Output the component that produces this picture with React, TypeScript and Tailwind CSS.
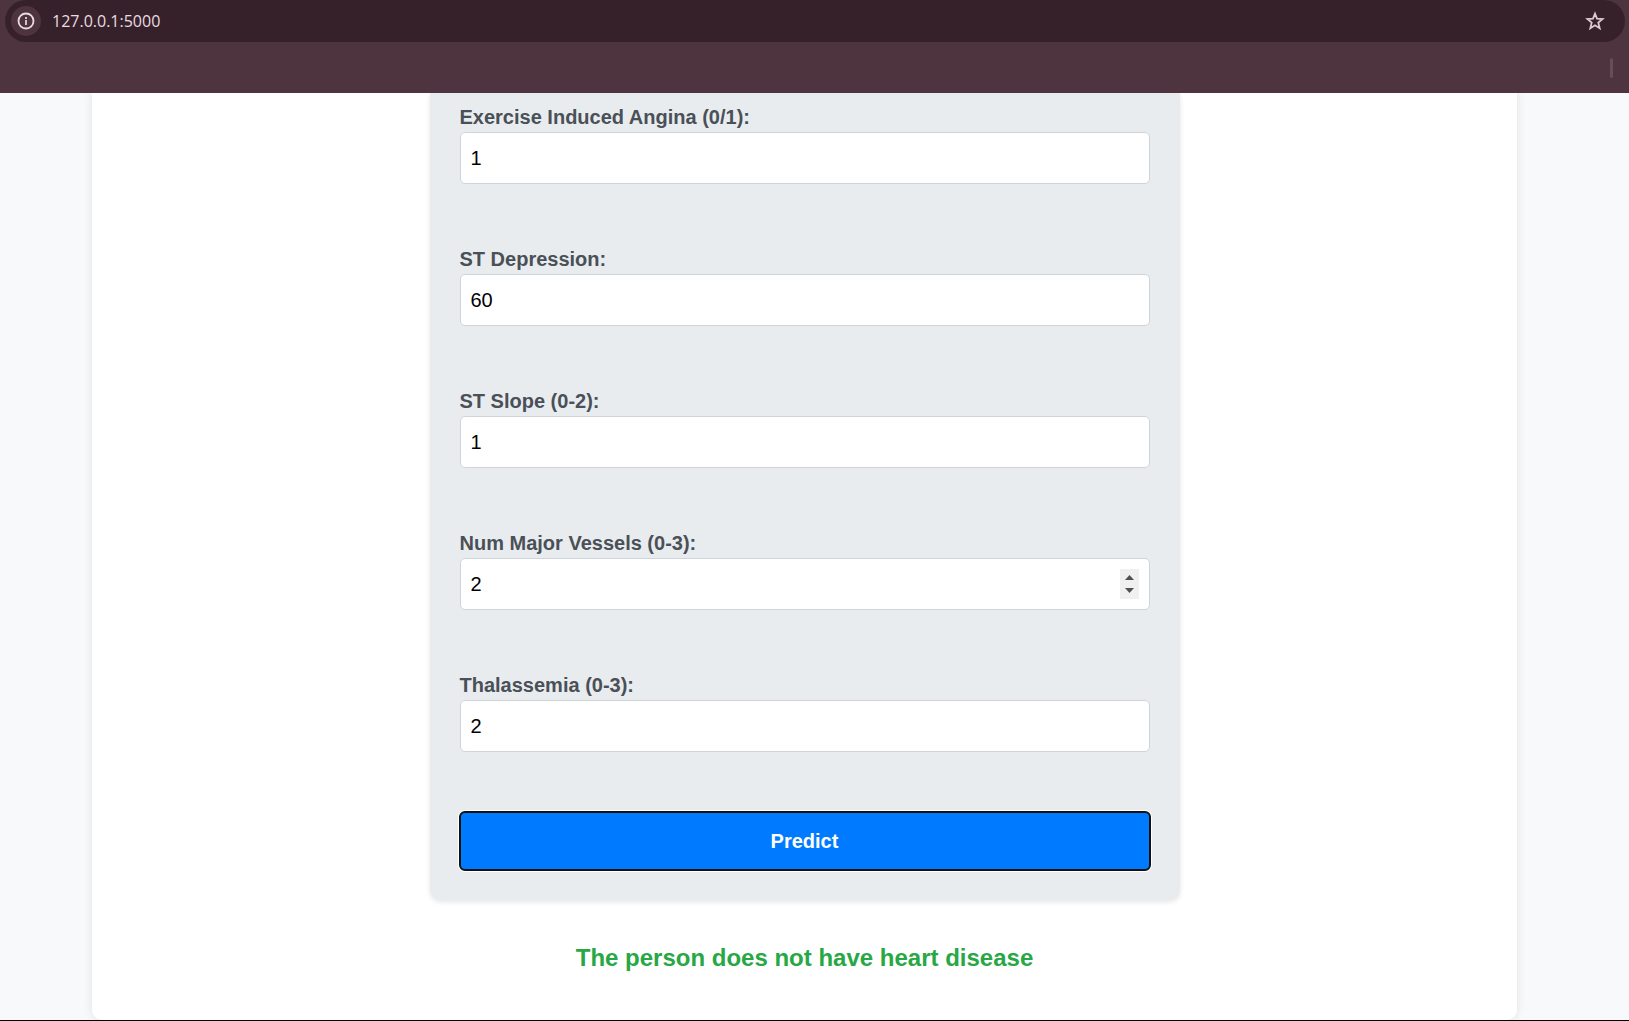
import { useState } from 'react';

type Field = { id: string; label: string; initial: string; max?: number; stepper?: boolean };

const fields: Field[] = [
  { id: 'exang', label: 'Exercise Induced Angina (0/1):', initial: '1', max: 1 },
  { id: 'oldpeak', label: 'ST Depression:', initial: '60' },
  { id: 'slope', label: 'ST Slope (0-2):', initial: '1', max: 2 },
  { id: 'ca', label: 'Num Major Vessels (0-3):', initial: '2', max: 3, stepper: true },
  { id: 'thal', label: 'Thalassemia (0-3):', initial: '2', max: 3 },
];

function AddressBar() {
  return (
    <header className="h-[93px] shrink-0 bg-[#4e343e]">
      <div className="ml-[5px] mr-1 flex h-[42px] items-center rounded-full bg-[#36212a] pl-1.5 pr-5">
        <button
          type="button"
          aria-label="View site information"
          className="flex size-[30px] items-center justify-center rounded-full bg-[#4e343e] text-[#ecdce0]"
        >
          <svg width="18" height="18" viewBox="0 0 18 18" fill="none" stroke="currentColor" strokeWidth="2">
            <circle cx="9" cy="9" r="7.5" strokeWidth="1.8" />
            <path d="M9 8v5M9 5v2" strokeWidth="1.7" />
          </svg>
        </button>
        <input
          aria-label="Address"
          defaultValue="127.0.0.1:5000"
          className="ml-[11px] min-w-0 flex-1 bg-transparent font-['Open_Sans',sans-serif] text-base text-[#e9dce0] outline-none"
        />
        <button type="button" aria-label="Bookmark this tab" className="text-[#dcc8cf]">
          <svg width="20" height="20" viewBox="0 0 20 20" fill="none" stroke="currentColor" strokeWidth="1.8">
            <path d="M10 2.6l2 5 5.6.4-4.3 3.6 1.4 5.6L10 14.2l-4.7 3 1.4-5.6L2.4 8l5.6-.4z" />
          </svg>
        </button>
      </div>
      <div className="flex justify-end pr-4 pt-4">
        <span className="h-5 w-[3px] rounded-full bg-[#6a4c57]" />
      </div>
    </header>
  );
}

function NumberField({ field }: { field: Field }) {
  const [value, setValue] = useState(field.initial);
  const step = (by: number) => {
    const next = Number(value) + by;
    if (next >= 0 && next <= (field.max ?? Infinity)) setValue(String(next));
  };

  return (
    <div className="mb-[60px]">
      <label htmlFor={field.id} className="block text-xl/[30px] font-bold text-[#495057]">
        {field.label}
      </label>
      <div className="flex h-[52px] items-center rounded-[5px] border border-[#ced4da] bg-white px-2.5">
        <input
          id={field.id}
          type="number"
          min={0}
          max={field.max}
          value={value}
          onChange={(e) => setValue(e.target.value)}
          className="h-full min-w-0 flex-1 appearance-none bg-transparent text-xl text-black outline-none [-moz-appearance:textfield] [&::-webkit-inner-spin-button]:appearance-none"
        />
        {field.stepper && (
          <div className="flex h-[30px] w-[19px] flex-col bg-[#f0f0f0] text-[#505050]">
            <button type="button" aria-label="Increase" onClick={() => step(1)} className="flex flex-1 items-end justify-center pb-1">
              <svg width="9" height="5" viewBox="0 0 9 5" fill="currentColor">
                <path d="M0 5L4.5 0L9 5z" />
              </svg>
            </button>
            <button type="button" aria-label="Decrease" onClick={() => step(-1)} className="flex flex-1 items-start justify-center pt-1">
              <svg width="9" height="5" viewBox="0 0 9 5" fill="currentColor">
                <path d="M0 0L4.5 5L9 0z" />
              </svg>
            </button>
          </div>
        )}
      </div>
    </div>
  );
}

export default function App() {
  return (
    <div className="flex min-h-screen flex-col border-b border-black bg-[#f8f9fa] font-['Liberation_Sans',Arial,sans-serif]">
      <AddressBar />
      <div className="flex flex-1 flex-col overflow-hidden pl-[92px] pr-28">
        <main className="flex-1 rounded-b-[10px] bg-white pb-11 shadow-[0_0_10px_rgba(0,0,0,0.1)]">
          <form
            onSubmit={(e) => e.preventDefault()}
            className="mx-auto max-w-[750px] rounded-b-[10px] bg-[#e9ecef] px-[30px] pb-[30px] pt-[9px] shadow-[0_2px_5px_rgba(0,0,0,0.1)]"
          >
            {fields.map((field) => (
              <NumberField key={field.id} field={field} />
            ))}
            <button
              type="submit"
              className="block h-[58px] w-full rounded-[5px] bg-[#007bff] text-xl font-bold text-white shadow-[0_0_0_2px_#fff] outline-2 -outline-offset-1 outline-[#101010]"
            >
              Predict
            </button>
          </form>
          <p className="mt-10 text-center text-2xl/9 font-bold text-[#28a745]">
            The person does not have heart disease
          </p>
        </main>
      </div>
    </div>
  );
}
